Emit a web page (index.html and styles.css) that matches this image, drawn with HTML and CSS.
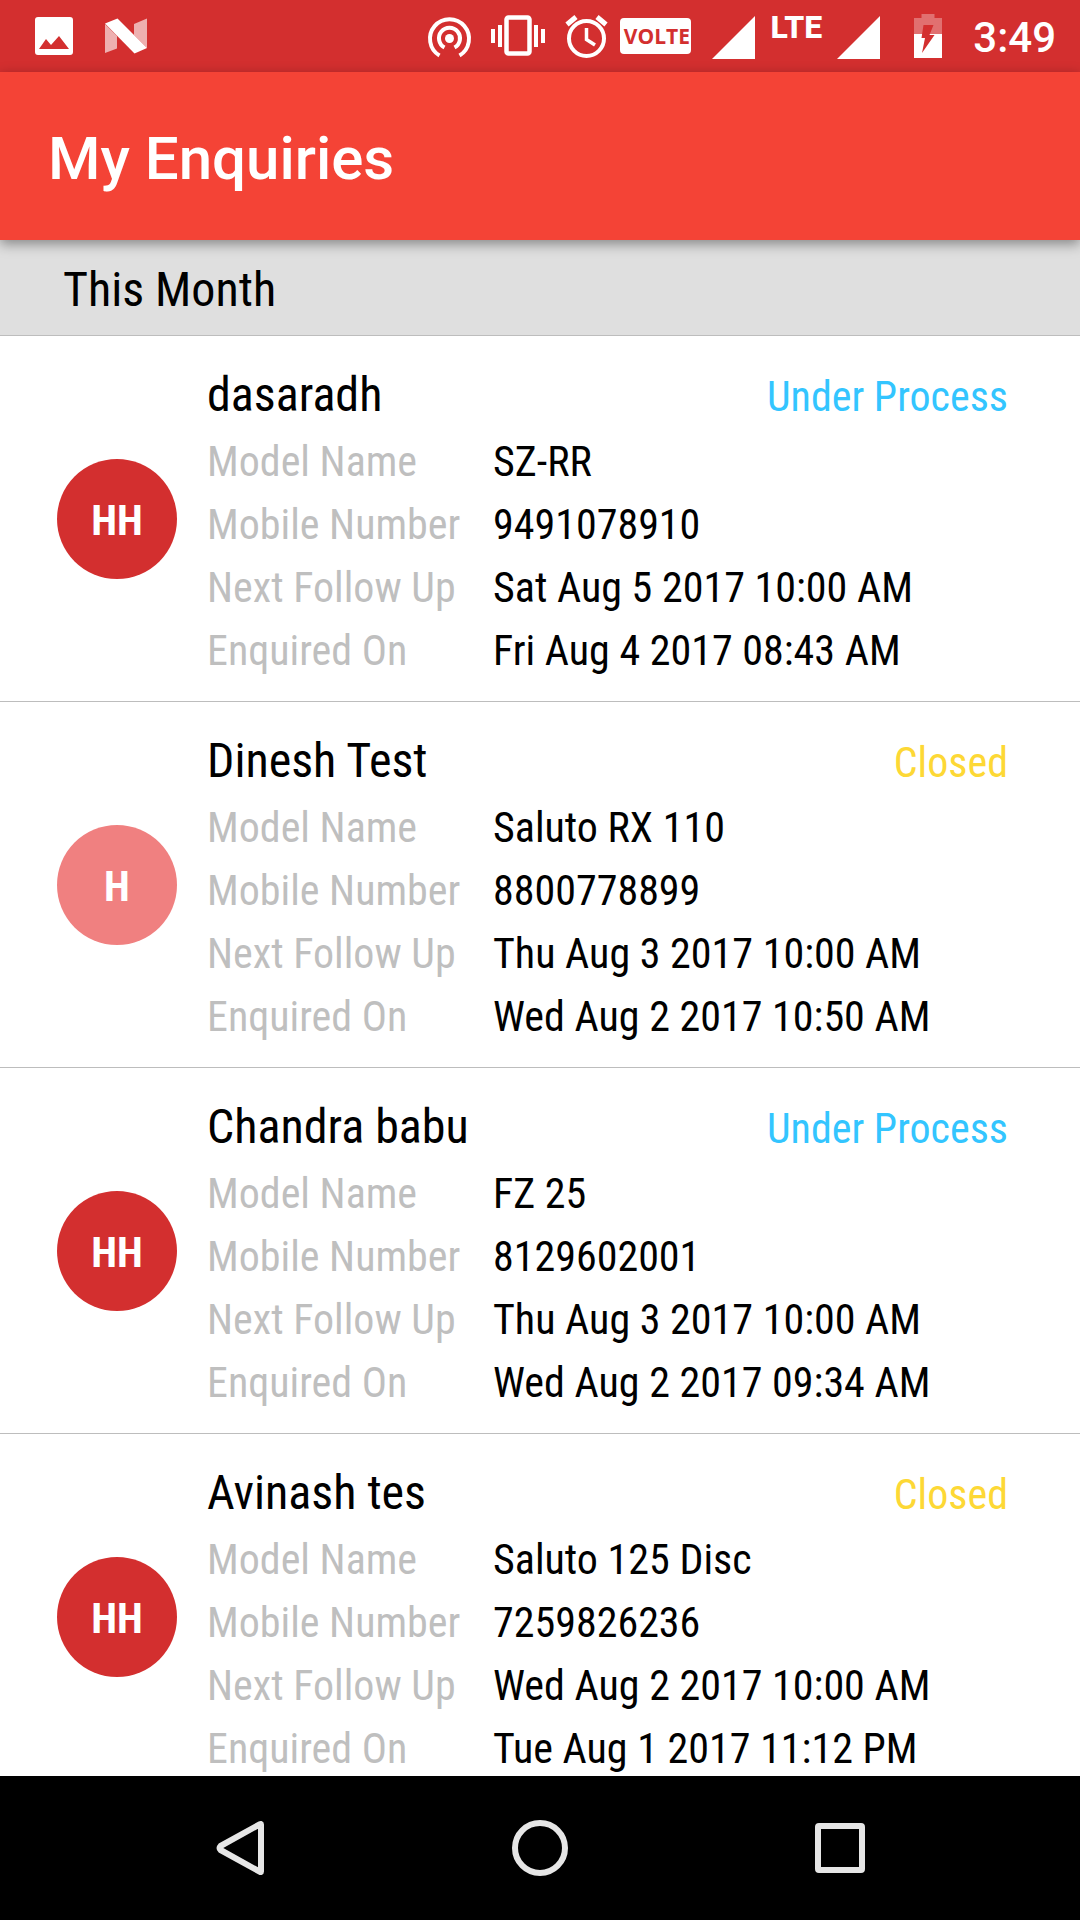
FILE: index.html
```html
<!DOCTYPE html>
<html lang="en">
<head>
  <meta charset="utf-8" />
  <meta name="viewport" content="width=device-width, initial-scale=1" />
  <title>My Enquiries</title>
  <link rel="stylesheet" href="styles.css">
</head>

<body>
  <div class="status-bar">
    <div class="notifications">
      <svg class="icon-notify" viewBox="0 0 72 72" aria-hidden="true">
        <path fill="#fff" fill-rule="evenodd" d="M20 17h32q3 0 3 3v32q0 3-3 3H20q-3 0-3-3V20q0-3 3-3zM21 49h30l-10-13-8 9-5-6z" />
      </svg>
      <svg class="icon-notify" viewBox="0 0 72 72" aria-hidden="true">
        <path fill="#eeb0b0" d="M15 24l12 12v12.500L15 53zM44 24l13-5.500V48L44 35z" />
        <path fill="#fff" d="M15 23.500L27.500 18.500 57 48l-12.500 5.500z" />
      </svg>
    </div>

    <div class="system-icons">
      <svg class="icon-system" viewBox="0 0 69 72" aria-hidden="true">
        <circle cx="36.500" cy="38.500" r="4.500" fill="#fff" />
        <path fill="none" stroke="#fff" stroke-width="4" d="M31.500 47.500A10.500 10.500 0 1 1 41.500 47.500M26.500 55.500A19.500 19.500 0 1 1 46.500 55.500" />
      </svg>
      <svg class="icon-system" viewBox="0 0 69 72" aria-hidden="true">
        <rect x="24.500" y="17.500" width="23" height="36" rx="2" fill="none" stroke="#fff" stroke-width="4.500" />
        <path fill="#fff" d="M9 29h4v14H9zM16 25h4v22h-4zM52 25h4v22h-4zM59 29h4v14h-4z" />
      </svg>
      <svg class="icon-system" viewBox="0 0 69 72" aria-hidden="true">
        <circle cx="35.500" cy="38.500" r="17.500" fill="none" stroke="#fff" stroke-width="4" />
        <path fill="none" stroke="#fff" stroke-width="3.500" d="M35.500 28v11.500l8.500 5.500" />
        <path fill="none" stroke="#fff" stroke-width="5" d="M16 24.500l9-7.500M46 17l9 7.500" />
      </svg>
      <span class="volte">VOLTE</span>
      <svg class="icon-signal" viewBox="0 0 43 72" aria-hidden="true">
        <path fill="#fff" d="M0 59L43 16v43z" />
      </svg>
      <span class="lte">LTE</span>
      <svg class="icon-signal" viewBox="0 0 43 72" aria-hidden="true">
        <path fill="#fff" d="M0 59L43 16v43z" />
      </svg>
      <svg class="icon-battery" viewBox="0 0 28 72" aria-hidden="true">
        <path fill="#e17070" d="M0 18h7.500v-4h13v4H28v16H0z" />
        <path fill="#fff" d="M0 34h28v24H0z" />
        <path fill="#d32f2f" d="M9.500 25h10l-4 10h5L8 53l3-15H7.500z" />
      </svg>
      <span class="clock">3:49</span>
    </div>
  </div>

  <header class="app-bar">
    <h1>My Enquiries</h1>
  </header>

  <main class="enquiries">
    <h2 class="month">This Month</h2>

    <article class="enquiry">
      <div class="avatar">HH</div>
      <div class="details">
        <div class="summary">
          <h3>dasaradh</h3>
          <span class="status process">Under Process</span>
        </div>
        <dl>
          <dt>Model Name</dt>
          <dd>SZ-RR</dd>
          <dt>Mobile Number</dt>
          <dd>9491078910</dd>
          <dt>Next Follow Up</dt>
          <dd>Sat Aug 5 2017 10:00 AM</dd>
          <dt>Enquired On</dt>
          <dd>Fri Aug 4 2017 08:43 AM</dd>
        </dl>
      </div>
    </article>

    <article class="enquiry">
      <div class="avatar light">H</div>
      <div class="details">
        <div class="summary">
          <h3>Dinesh Test</h3>
          <span class="status closed">Closed</span>
        </div>
        <dl>
          <dt>Model Name</dt>
          <dd>Saluto RX 110</dd>
          <dt>Mobile Number</dt>
          <dd>8800778899</dd>
          <dt>Next Follow Up</dt>
          <dd>Thu Aug 3 2017 10:00 AM</dd>
          <dt>Enquired On</dt>
          <dd>Wed Aug 2 2017 10:50 AM</dd>
        </dl>
      </div>
    </article>

    <article class="enquiry">
      <div class="avatar">HH</div>
      <div class="details">
        <div class="summary">
          <h3>Chandra babu</h3>
          <span class="status process">Under Process</span>
        </div>
        <dl>
          <dt>Model Name</dt>
          <dd>FZ 25</dd>
          <dt>Mobile Number</dt>
          <dd>8129602001</dd>
          <dt>Next Follow Up</dt>
          <dd>Thu Aug 3 2017 10:00 AM</dd>
          <dt>Enquired On</dt>
          <dd>Wed Aug 2 2017 09:34 AM</dd>
        </dl>
      </div>
    </article>

    <article class="enquiry">
      <div class="avatar">HH</div>
      <div class="details">
        <div class="summary">
          <h3>Avinash tes</h3>
          <span class="status closed">Closed</span>
        </div>
        <dl>
          <dt>Model Name</dt>
          <dd>Saluto 125 Disc</dd>
          <dt>Mobile Number</dt>
          <dd>7259826236</dd>
          <dt>Next Follow Up</dt>
          <dd>Wed Aug 2 2017 10:00 AM</dd>
          <dt>Enquired On</dt>
          <dd>Tue Aug 1 2017 11:12 PM</dd>
        </dl>
      </div>
    </article>
  </main>

  <nav class="nav-bar">
    <button type="button" aria-label="Back">
      <svg viewBox="0 0 72 72" aria-hidden="true">
        <path d="M57 12.500v47q0 1-1 .300L16.500 38q-2-2 0-4L56 12.200q1-.700 1 .300z" />
      </svg>
    </button>
    <button type="button" aria-label="Home">
      <svg viewBox="0 0 72 72" aria-hidden="true">
        <circle cx="36" cy="36" r="25" />
      </svg>
    </button>
    <button type="button" aria-label="Recent apps">
      <svg viewBox="0 0 72 72" aria-hidden="true">
        <rect x="14" y="14" width="44" height="44" rx="1" />
      </svg>
    </button>
  </nav>
</body>
</html>
```
FILE: styles.css
```css
* {
  box-sizing: border-box;
}

body {
  margin: 0;
  height: 100vh;
  display: flex;
  flex-direction: column;
  overflow: hidden;
  background: #fff;
  color: #000;
  font-family: 'Roboto Condensed', Roboto, sans-serif;
}

h1, h2, h3, dl, dd {
  margin: 0;
  font-weight: 400;
}

svg {
  display: block;
  flex: none;
}

/* Status bar */
.status-bar {
  flex: none;
  display: flex;
  justify-content: space-between;
  height: 72px;
  padding: 0 24px 0 18px;
  background: #d32f2f;
  color: #fff;
  font-family: Roboto, sans-serif;
}

.notifications,
.system-icons {
  display: flex;
  align-items: center;
}

.icon-notify { width: 72px; height: 72px; }
.icon-system { width: 69px; height: 72px; }
.icon-signal { width: 43px; height: 72px; }

.icon-battery {
  width: 28px;
  height: 72px;
  margin: 0 31px 0 34px;
}

.volte {
  width: 71px;
  margin-right: 21px;
  padding-left: 2px;
  border-radius: 4px;
  background: #fff;
  color: #d32f2f;
  font-family: 'Open Sans', sans-serif;
  font-size: 21px;
  font-weight: 700;
  line-height: 36px;
  text-align: center;
}

.lte {
  align-self: flex-start;
  margin: 0 15px;
  font-size: 32px;
  font-weight: 800;
  line-height: 54px;
}

.clock {
  font-size: 42px;
  font-weight: 500;
  line-height: 72px;
  padding-top: 3px;
}

/* App bar */
.app-bar {
  position: relative;
  z-index: 1;
  flex: none;
  height: 168px;
  padding: 4px 48px 0;
  background: #f44336;
  box-shadow: 0 4px 12px rgba(0, 0, 0, 0.4);
}

.app-bar h1 {
  color: #fff;
  font-family: Roboto, sans-serif;
  font-size: 60px;
  font-weight: 500;
  line-height: 166px;
}

/* Enquiry list */
.enquiries {
  flex: 1;
  min-height: 0;
  overflow: hidden;
}

.month {
  height: 96px;
  padding: 4px 63px 0;
  border-bottom: 1px solid #bdbdbd;
  background: #dfdfdf;
  font-size: 48px;
  line-height: 91px;
}

.enquiry {
  display: flex;
  align-items: center;
  gap: 30px;
  padding: 0 72px 0 57px;
  border-bottom: 1px solid #bdbdbd;
}

.avatar {
  flex: none;
  width: 120px;
  height: 120px;
  border-radius: 50%;
  background: #d32f2f;
  color: #fff;
  font-size: 42px;
  font-weight: 700;
  line-height: 124px;
  text-align: center;
}

.avatar.light { background: #f08080; }

.details {
  flex: 1;
  padding: 27px 0 19px;
  font-size: 42px;
  line-height: 63px;
}

.summary {
  display: flex;
  align-items: baseline;
  justify-content: space-between;
  height: 63px;
  margin-bottom: 4px;
}

.summary h3 { font-size: 48px; }

.process { color: #33c5ff; }
.closed { color: #fdd835; }

dl {
  display: grid;
  grid-template-columns: 286px 1fr;
}

dt { color: #bfbfbf; }

/* Navigation bar */
.nav-bar {
  flex: none;
  display: grid;
  grid-template-columns: repeat(3, 1fr);
  height: 144px;
  padding: 0 90px;
  background: #000;
}

.nav-bar button {
  display: flex;
  align-items: center;
  justify-content: center;
  padding: 0;
  border: 0;
  background: none;
}

.nav-bar svg {
  width: 72px;
  height: 72px;
  fill: none;
  stroke: #e6e6e6;
  stroke-width: 6;
}
```
